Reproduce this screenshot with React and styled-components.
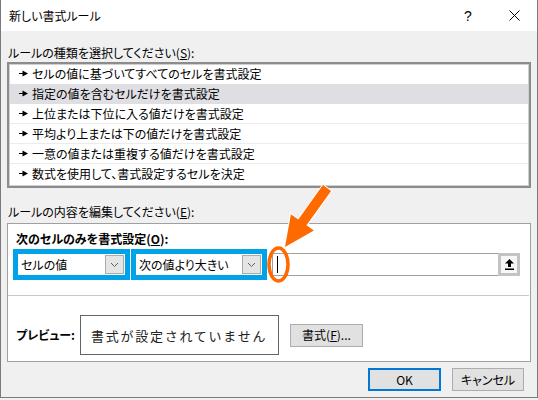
import React from "react";
import styled, { createGlobalStyle } from "styled-components";

const GlobalStyle = createGlobalStyle`
  html, body { margin: 0; padding: 0; background: #f0f0f0; }
  body {
    font-family: "Noto Sans CJK JP", "Noto Sans", sans-serif;
    font-size: 12px;
    color: #000;
    font-feature-settings: "palt";
  }
  * { box-sizing: border-box; }
`;

const Window = styled.div`
  position: relative;
  width: 538px;
  height: 398px;
  background: #f0f0f0;
  border-left: 1px solid #7a7a7a;
  border-right: 1px solid #7a7a7a;
  border-bottom: 1px solid #7a7a7a;
  display: flex;
  flex-direction: column;
`;

const TitleBar = styled.div`
  height: 31px;
  background: #fff;
  display: flex;
  align-items: center;
  padding-left: 8px;
`;

const TitleText = styled.div`
  flex: 1;
  font-size: 12px;
  line-height: 16px;
`;

const HelpMark = styled.div`
  font-family: "Liberation Sans", sans-serif;
  font-size: 14px;
  width: 10px;
  margin-right: 35px;
  line-height: 16px;
`;

const CloseMark = styled.div`
  width: 11px;
  height: 11px;
  margin-right: 17px;
  display: flex;
`;

const Body = styled.div`
  flex: 1;
  display: flex;
  flex-direction: column;
  padding: 14px 6px 0 6px;
`;

const Label = styled.div`
  line-height: 16px;
  height: 16px;
  padding-left: ${(p) => p.$indent || 1}px;
  margin-top: ${(p) => p.$top || 0}px;
  margin-bottom: ${(p) => p.$bottom || 0}px;
`;

const Under = styled.span`
  text-decoration: underline;
  text-underline-offset: 1px;
`;

const ListBox = styled.div`
  height: 126px;
  background: #fff;
  border: 2px solid #8c8c8c;
  box-shadow: inset 0 0 0 1px #d0d0d0;
  display: flex;
  flex-direction: column;
`;

const ListRow = styled.div`
  height: 20px;
  display: flex;
  align-items: center;
  padding-left: 9px;
  background: ${(p) => (p.$selected ? "#dedee3" : "transparent")};
  border-bottom: 1px solid ${(p) => (p.$line ? "#ececec" : "transparent")};
  margin-left: 1px;
  margin-right: 1px;
`;

const RowText = styled.span`
  margin-left: 4px;
  line-height: 16px;
`;

const Panel = styled.div`
  height: 139px;
  background: #fff;
  border: 1px solid #a0a0a0;
  display: flex;
  flex-direction: column;
  padding: 7px 0 5px 0;
`;

const Heading = styled.div`
  font-weight: bold;
  line-height: 16px;
  padding-left: 8px;
`;

const ComboRow = styled.div`
  margin-top: 2px;
  height: 31px;
  display: flex;
  align-items: center;
  padding-left: 5px;
`;

const Highlight = styled.div`
  border: 5px solid #00a2e8;
  height: 31px;
  margin-right: ${(p) => p.$gap || 0}px;
  display: flex;
`;

const Combo = styled.div`
  width: ${(p) => p.$w}px;
  height: 21px;
  background: #fff;
  display: flex;
  align-items: center;
  padding-left: 3px;
  justify-content: space-between;
`;

const ComboText = styled.span`
  line-height: 16px;
`;

const DropBtn = styled.div`
  width: 19px;
  height: 19px;
  margin-right: 1px;
  background: #e5e5e5;
  border: 1px solid #acacac;
  display: flex;
  align-items: center;
  justify-content: center;
`;

const Input = styled.div`
  width: 248px;
  height: 23px;
  border: 1px solid #a0a0a0;
  display: flex;
  align-items: center;
`;

const Caret = styled.div`
  width: 1px;
  height: 17px;
  background: #000;
  margin-left: 4px;
`;

const Spacer = styled.div`
  flex: 1;
`;

const CollapseBtn = styled.div`
  width: 22px;
  height: 23px;
  margin: -1px -1px -1px 0;
  border: 3px solid #c3c3c3;
  background: #f7f7f7;
  display: flex;
  align-items: center;
  justify-content: center;
`;

const Separator = styled.div`
  height: 1px;
  background: #c8c8c8;
  margin-top: 15px;
  margin-right: 1px;
`;

const PreviewRow = styled.div`
  margin-top: 19px;
  display: flex;
  align-items: center;
  padding-left: 8px;
`;

const PreviewLabel = styled.div`
  width: 64px;
  font-weight: bold;
  line-height: 16px;
`;

const PreviewBox = styled.div`
  width: 199px;
  height: 40px;
  border: 1px solid #646464;
  display: flex;
  align-items: center;
  padding-left: 10px;
  font-size: 13px;
  letter-spacing: 1.75px;
  font-feature-settings: normal;
  color: #222;
`;

const Button = styled.div`
  width: ${(p) => p.$w || 73}px;
  height: 23px;
  background: #e1e1e1;
  border: ${(p) => (p.$default ? "2px solid #0078d7" : "1px solid #adadad")};
  display: flex;
  align-items: center;
  justify-content: center;
  line-height: 16px;
  margin-left: ${(p) => p.$ml || 0}px;
`;

const ButtonRow = styled.div`
  display: flex;
  justify-content: flex-end;
  margin-top: 6px;
  padding-right: 7px;
  gap: 11px;
`;

const Overlay = styled.svg`
  position: absolute;
  left: -1px;
  top: 0;
  pointer-events: none;
`;

const RowArrow = () => (
  <svg width="9" height="7" viewBox="0 0 9 7">
    <polygon points="0,3 3.5,3 3.5,0.5 9,3.5 3.5,6.5 3.5,4 0,4" fill="#000" />
  </svg>
);

const Chevron = () => (
  <svg width="9" height="6" viewBox="0 0 9 6">
    <polyline points="1,1 4.5,4.5 8,1" fill="none" stroke="#606060" strokeWidth="1" />
  </svg>
);

const items = [
  "セルの値に基づいてすべてのセルを書式設定",
  "指定の値を含むセルだけを書式設定",
  "上位または下位に入る値だけを書式設定",
  "平均より上または下の値だけを書式設定",
  "一意の値または重複する値だけを書式設定",
  "数式を使用して、書式設定するセルを決定",
];

export default function App() {
  return (
    <>
      <GlobalStyle />
      <Window>
        <TitleBar>
          <TitleText>新しい書式ルール</TitleText>
          <HelpMark>?</HelpMark>
          <CloseMark>
            <svg width="11" height="11" viewBox="0 0 11 11">
              <line x1="0.5" y1="0.5" x2="10.5" y2="10.5" stroke="#000" strokeWidth="1" />
              <line x1="10.5" y1="0.5" x2="0.5" y2="10.5" stroke="#000" strokeWidth="1" />
            </svg>
          </CloseMark>
        </TitleBar>
        <Body>
          <Label $bottom={1}>
            ルールの種類を選択してください(<Under>S</Under>):
          </Label>
          <ListBox>
            {items.map((t, i) => (
              <ListRow key={t} $selected={i === 1} $line={i >= 2 && i < 5}>
                <RowArrow />
                <RowText>{t}</RowText>
              </ListRow>
            ))}
          </ListBox>
          <Label $top={16} $bottom={3}>
            ルールの内容を編集してください(<Under>E</Under>):
          </Label>
          <Panel>
            <Heading>
              次のセルのみを書式設定(<Under>O</Under>):
            </Heading>
            <ComboRow>
              <Highlight $gap={1}>
                <Combo $w={107}>
                  <ComboText>セルの値</ComboText>
                  <DropBtn>
                    <Chevron />
                  </DropBtn>
                </Combo>
              </Highlight>
              <Highlight $gap={5}>
                <Combo $w={126}>
                  <ComboText>次の値より大きい</ComboText>
                  <DropBtn>
                    <Chevron />
                  </DropBtn>
                </Combo>
              </Highlight>
              <Input>
                <Caret />
                <Spacer />
                <CollapseBtn>
                  <svg width="9" height="11" viewBox="0 0 9 11">
                    <polygon points="4.5,0 0,4.5 3,4.5 3,8 6,8 6,4.5 9,4.5" fill="#000" />
                    <rect x="0" y="9.5" width="9" height="1.5" fill="#000" />
                  </svg>
                </CollapseBtn>
              </Input>
            </ComboRow>
            <Separator />
            <PreviewRow>
              <PreviewLabel>プレビュー:</PreviewLabel>
              <PreviewBox>書式が設定されていません</PreviewBox>
              <Button $w={73} $ml={11}>
                書式(<Under>F</Under>)...
              </Button>
            </PreviewRow>
          </Panel>
          <ButtonRow>
            <Button $default $w={73}>OK</Button>
            <Button $w={72}>キャンセル</Button>
          </ButtonRow>
        </Body>
        <Overlay width="538" height="398" viewBox="0 0 538 398">
          <ellipse cx="278.5" cy="264.5" rx="9.5" ry="16.5" fill="none" stroke="#ff6a00" strokeWidth="3.5" />
          <polygon
            points="322.9,185.1 331.1,190.9 306.5,225.3 313.9,230.5 285,247 290.9,214.3 298.3,219.5"
            fill="#ff6a00"
            stroke="#fff"
            strokeWidth="2"
            strokeLinejoin="miter"
            paintOrder="stroke"
          />
        </Overlay>
      </Window>
    </>
  );
}
